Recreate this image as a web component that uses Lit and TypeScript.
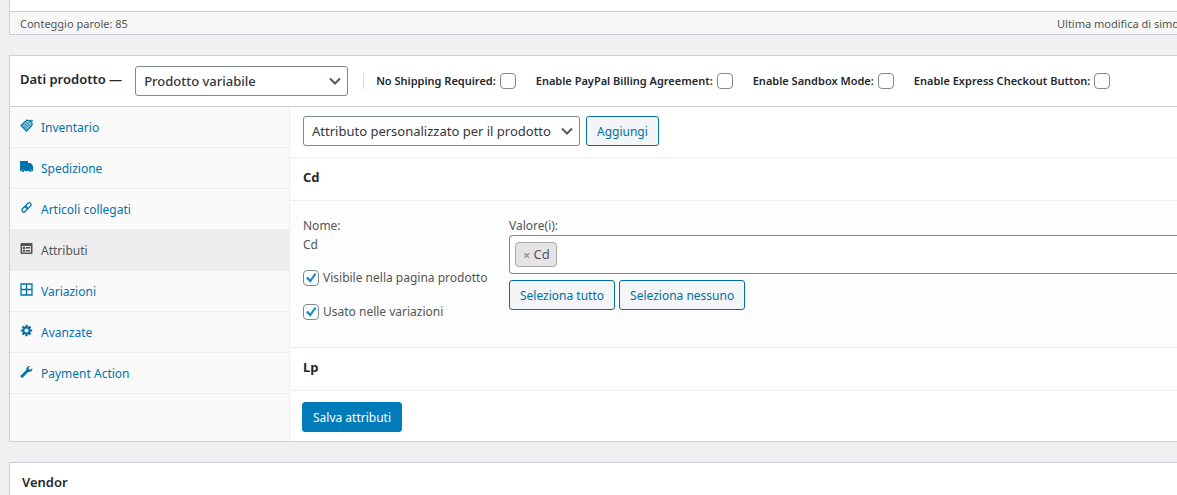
import { LitElement, html, css, svg, nothing } from "lit";
import { customElement, property, state } from "lit/decorators.js";
import { classMap } from "lit/directives/class-map.js";

const tabIcons = {
  inventory: svg`<path d="M1 6.500 6.800 1 10.500 1.800 12 3.500 12 6.500 6.500 12.200z" fill="currentColor" fill-opacity=".45" stroke="currentColor" stroke-width="1.100"/><path d="M3.200 6.400l3.400 3.400M4.800 4.900l3.400 3.400M6.300 3.500l3.400 3.400" stroke="currentColor" stroke-width=".8"/><path d="M9.200 3.500 11.600.8 12.800 2" fill="none" stroke="currentColor"/>`,
  truck: svg`<path fill="currentColor" d="M0 1h8v2h2.800L13 6v5h-1a1.600 1.600 0 0 0-3.200 0H4.700a1.600 1.600 0 0 0-3.200 0H0z"/><circle cx="3.100" cy="10.800" r="1.200" fill="currentColor"/><circle cx="10.400" cy="10.800" r="1.200" fill="currentColor"/>`,
  link: svg`<g fill="none" stroke="currentColor" stroke-width="1.300"><rect x="-3.200" y="-1.900" width="6.400" height="3.800" rx="1.900" transform="translate(8.300 4.600) rotate(-45)"/><rect x="-3.200" y="-1.900" width="6.400" height="3.800" rx="1.900" transform="translate(4.700 8.200) rotate(-45)"/></g>`,
  card: svg`<path fill="currentColor" fill-rule="evenodd" d="M1.500 1h10a1 1 0 0 1 1 1v9a1 1 0 0 1-1 1h-10a1 1 0 0 1-1-1V2a1 1 0 0 1 1-1zM2 4v6.500h9V4z"/><path fill="currentColor" d="M2.700 4.800h2.500v2.400H2.700zM6 5h4.300v1.500H6zM2.700 8h2.500v1.700H2.700zM6 8h4.300v1.500H6z"/>`,
  grid: svg`<path fill="none" stroke="currentColor" stroke-width="1.300" d="M1 1h11v11H1zM6.500 1v11M1 6.500h11"/>`,
  gear: svg`<circle cx="6.500" cy="6.500" r="3.200" fill="none" stroke="currentColor" stroke-width="2.200"/><path stroke="currentColor" stroke-width="2.200" d="M6.500 .8v2M6.500 10.200v2M.8 6.500h2M10.200 6.500h2M2.500 2.500l1.400 1.400M9.100 9.100l1.400 1.400M10.500 2.500L9.100 3.900M3.900 9.100l-1.400 1.400"/>`,
  wrench: svg`<path fill="currentColor" d="M12.300 3.300 10.300 4.800 8.700 4.300 8.500 2.700 10.300 1C8 .5 5.900 2.300 6.300 4.900L1 10.200a1.400 1.400 0 0 0 2 2L8 7c2.700.5 4.800-1.400 4.300-3.700z"/>`,
};

type IconName = keyof typeof tabIcons;

const base = css`
  * {
    box-sizing: border-box;
  }
  button,
  input,
  select {
    font: inherit;
    margin: 0;
  }
`;

@customElement("wp-select")
class WpSelect extends LitElement {
  @property() label = "";
  @property({ attribute: false }) options: string[] = [];

  static styles = [
    base,
    css`
      :host {
        display: inline-grid;
        align-items: center;
        height: 30px;
      }
      select {
        grid-area: 1 / 1;
        width: 100%;
        height: 30px;
        padding: 0 24px 0 8px;
        border: 1px solid #7e8993;
        border-radius: 3px;
        background: #fff;
        color: #32373c;
        appearance: none;
      }
      svg {
        grid-area: 1 / 1;
        justify-self: end;
        margin-right: 6px;
        pointer-events: none;
      }
    `,
  ];

  render() {
    return html`
      <select aria-label=${this.label}>
        ${this.options.map((o) => html`<option>${o}</option>`)}
      </select>
      <svg width="14" height="14" viewBox="0 0 14 14" aria-hidden="true">
        <path d="M2 4.500l5 5 5-5" fill="none" stroke="#50575e" stroke-width="2" />
      </svg>
    `;
  }
}

@customElement("wp-checkbox")
class WpCheckbox extends LitElement {
  @property() label = "";
  @property({ type: Boolean }) checked = false;
  @property({ type: Boolean }) trailing = false;

  static styles = [
    base,
    css`
      :host {
        display: block;
      }
      label {
        display: flex;
        align-items: center;
        gap: 4px;
        white-space: nowrap;
      }
      .trailing {
        flex-direction: row-reverse;
        justify-content: flex-end;
      }
      .trailing .text {
        padding-bottom: 2px;
      }
      .box {
        display: grid;
      }
      input {
        grid-area: 1 / 1;
        width: 16px;
        height: 16px;
        border: 1px solid #7e8993;
        border-radius: 4px;
        background: #fff;
        appearance: none;
      }
      svg {
        grid-area: 1 / 1;
        pointer-events: none;
      }
    `,
  ];

  render() {
    return html`
      <label class=${classMap({ trailing: this.trailing })}>
        <span class="box">
          <input
            type="checkbox"
            .checked=${this.checked}
            @change=${(e: Event) => (this.checked = (e.target as HTMLInputElement).checked)}
          />
          ${this.checked
            ? html`<svg width="16" height="16" viewBox="0 0 16 16" aria-hidden="true">
                <path d="M3 8.200l1.900-1.500 2.300 2.600 4.500-6.300 1.700 1.300-6 8.400z" fill="#1e8cbe" />
              </svg>`
            : nothing}
        </span>
        <span class="text">${this.label}</span>
      </label>
    `;
  }
}

@customElement("app-root")
class AppRoot extends LitElement {
  @state() private active = "Attributi";

  private tabs: { label: string; icon: IconName }[] = [
    { label: "Inventario", icon: "inventory" },
    { label: "Spedizione", icon: "truck" },
    { label: "Articoli collegati", icon: "link" },
    { label: "Attributi", icon: "card" },
    { label: "Variazioni", icon: "grid" },
    { label: "Avanzate", icon: "gear" },
    { label: "Payment Action", icon: "wrench" },
  ];

  private flags = [
    "No Shipping Required:",
    "Enable PayPal Billing Agreement:",
    "Enable Sandbox Mode:",
    "Enable Express Checkout Button:",
  ];

  static styles = [
    base,
    css`
      :host {
        display: flex;
        flex-direction: column;
        gap: 20px;
        min-height: 100vh;
        padding-left: 9px;
        overflow: hidden;
        background: #f0f0f0;
        color: #555;
        font-family: "Segoe UI", "Noto Sans", sans-serif;
        font-size: 12px;
        line-height: 19px;
      }
      .panel {
        border: 1px solid #ccd0d4;
        border-right: 0;
        background: #fff;
      }
      .editor {
        border-top: 0;
        padding-top: 11px;
      }
      .status {
        display: flex;
        justify-content: space-between;
        padding: 2px 0 1px 10px;
        border-top: 1px solid #ccd0d4;
        background: #f7f7f7;
        font-size: 11px;
      }
      .edited {
        width: 120px;
        white-space: nowrap;
      }
      .head {
        display: flex;
        align-items: center;
        height: 51px;
        padding-left: 10px;
        border-bottom: 1px solid #ccd0d4;
        color: #23282d;
        white-space: nowrap;
      }
      h2 {
        margin: 0;
        font-size: 13px;
        font-weight: 600;
      }
      .head h2 {
        padding-bottom: 3px;
      }
      .type {
        width: 213px;
        margin: 0 15px 0 13px;
        font-size: 13px;
        font-weight: 500;
      }
      .flags {
        display: flex;
        gap: 20px;
        font-size: 11px;
        font-weight: 600;
        align-items: center;
      }
      .rule {
        width: 1px;
        height: 16px;
        margin-right: 12px;
        background: #dcdcde;
      }
      .body {
        display: grid;
        grid-template-columns: 280px 1fr;
      }
      nav {
        border-right: 1px solid #eee;
        background: #fafafa;
      }
      nav a {
        display: flex;
        align-items: center;
        gap: 8px;
        height: 41px;
        padding-left: 10px;
        border-bottom: 1px solid #eee;
        color: #0073aa;
        text-decoration: none;
      }
      nav a.active {
        background: #eee;
        color: #555;
      }
      nav svg {
        margin-bottom: 3px;
      }
      .tools {
        display: flex;
        gap: 6px;
        height: 51px;
        padding: 9px 13px;
        border-bottom: 1px solid #eee;
      }
      .custom {
        width: 277px;
        font-size: 13px;
      }
      button {
        height: 30px;
        padding: 0 10px;
        border: 1px solid #0071a1;
        border-radius: 3px;
        background: #f3f5f6;
        color: #0071a1;
        white-space: nowrap;
      }
      h3 {
        display: flex;
        align-items: center;
        height: 43px;
        margin: 0;
        padding: 0 13px 3px;
        border-bottom: 1px solid #eee;
        color: #23282d;
        font-size: 13px;
        font-weight: 700;
      }
      .detail {
        display: grid;
        grid-template-columns: 206px 1fr;
        height: 147px;
        padding: 15px 0 0 13px;
        border-bottom: 1px solid #eee;
        background: #fdfdfd;
      }
      .checks {
        display: grid;
        gap: 15px;
        margin-top: 14px;
      }
      .tokens {
        display: flex;
        align-items: center;
        height: 39px;
        padding: 0 5px;
        border: 1px solid #7e8993;
        border-right: 0;
        border-radius: 4px 0 0 4px;
        background: #fff;
      }
      .token {
        display: flex;
        align-items: center;
        gap: 3px;
        height: 25px;
        padding: 0 6px 0 7px;
        border: 1px solid #aaa;
        border-radius: 4px;
        background: #e4e4e4;
        font-size: 13px;
      }
      .token button {
        height: 18px;
        padding: 0;
        border: 0;
        background: none;
        color: #999;
        font-weight: 700;
        line-height: 18px;
      }
      .tokens input {
        flex: 1;
        min-width: 0;
        border: 0;
        outline: 0;
        background: none;
      }
      .picks {
        display: flex;
        gap: 4px;
        margin-top: 6px;
      }
      .save {
        padding: 11px 12px 9px;
      }
      .save button {
        border-color: #007cba;
        background: #007cba;
        color: #fff;
      }
      .vendor {
        flex: 1;
        padding: 10px 12px;
        color: #23282d;
      }
    `,
  ];

  render() {
    return html`
      <section class="panel editor">
        <div class="status">
          <span>Conteggio parole: 85</span>
          <span class="edited">Ultima modifica di simo</span>
        </div>
      </section>
      <section class="panel">
        <div class="head">
          <h2>Dati prodotto —</h2>
          <wp-select class="type" label="Tipo di prodotto" .options=${["Prodotto variabile"]}></wp-select>
          <span class="rule"></span>
          <div class="flags">
            ${this.flags.map((f) => html`<wp-checkbox trailing .label=${f}></wp-checkbox>`)}
          </div>
        </div>
        <div class="body">
          <nav>
            ${this.tabs.map(
              (t) => html`<a
                href="#"
                class=${classMap({ active: t.label === this.active })}
                @click=${(e: Event) => {
                  e.preventDefault();
                  this.active = t.label;
                }}
                ><svg width="13" height="13" viewBox="0 0 13 13" aria-hidden="true">${tabIcons[t.icon]}</svg
                >${t.label}</a
              >`
            )}
          </nav>
          <div>
            <div class="tools">
              <wp-select
                class="custom"
                label="Attributo"
                .options=${["Attributo personalizzato per il prodotto"]}
              ></wp-select>
              <button type="button">Aggiungi</button>
            </div>
            <h3>Cd</h3>
            <div class="detail">
              <div>
                <div>Nome:</div>
                <div>Cd</div>
                <div class="checks">
                  <wp-checkbox checked label="Visibile nella pagina prodotto"></wp-checkbox>
                  <wp-checkbox checked label="Usato nelle variazioni"></wp-checkbox>
                </div>
              </div>
              <div>
                <label for="values">Valore(i):</label>
                <div class="tokens">
                  <span class="token"><button type="button" aria-label="Rimuovi Cd">×</button>Cd</span>
                  <input id="values" type="text" />
                </div>
                <div class="picks">
                  <button type="button">Seleziona tutto</button>
                  <button type="button">Seleziona nessuno</button>
                </div>
              </div>
            </div>
            <h3>Lp</h3>
            <div class="save"><button type="button">Salva attributi</button></div>
          </div>
        </div>
      </section>
      <section class="panel vendor"><h2>Vendor</h2></section>
    `;
  }
}
